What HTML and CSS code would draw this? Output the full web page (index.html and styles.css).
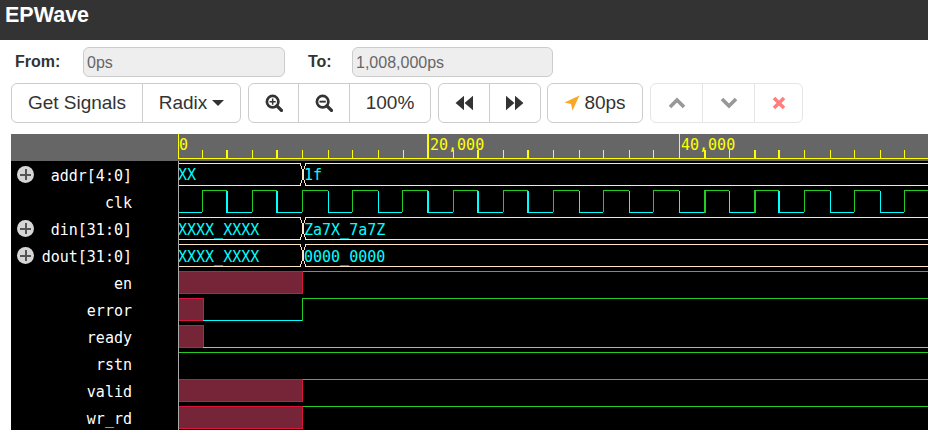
FILE: index.html
```html
<!DOCTYPE html>
<html lang="en">
<head>
  <meta charset="UTF-8" />
  <title>EPWave</title>
  <link rel="stylesheet" href="styles.css">
</head>
<body>

<div class="title-bar">EPWave</div>

<div class="range-row">
  <label class="range-label from-label">From:</label>
  <div class="range-input from-input">0ps</div>
  <label class="range-label to-label">To:</label>
  <div class="range-input to-input">1,008,000ps</div>
</div>

<div class="toolbar">
  <div class="btn-group">
    <button class="btn signals-btn">Get Signals</button>
    <button class="btn radix-btn">Radix <span class="caret"></span></button>
  </div>
  <div class="btn-group">
    <button class="btn zoom-btn">
      <svg class="icon" viewBox="0 0 16 16"><circle cx="6.800" cy="6.800" r="5.100" fill="none" stroke="#333" stroke-width="2.400"/><path d="M10.600 10.600l4 4" stroke="#333" stroke-width="3" stroke-linecap="round"/><path d="M4.100 6.800h5.400M6.800 4.100v5.400" stroke="#333" stroke-width="1.300"/></svg>
    </button>
    <button class="btn zoom-btn wide-zoom">
      <svg class="icon" viewBox="0 0 16 16"><circle cx="6.800" cy="6.800" r="5.100" fill="none" stroke="#333" stroke-width="2.400"/><path d="M10.600 10.600l4 4" stroke="#333" stroke-width="3" stroke-linecap="round"/><path d="M4 6.800h5.600" stroke="#333" stroke-width="1.700"/></svg>
    </button>
    <button class="btn pct-btn">100%</button>
  </div>
  <div class="btn-group">
    <button class="btn seek-btn">
      <svg class="icon" viewBox="0 0 16 16"><path d="M8 1.500v13L0.500 8zM16 1.500v13L8.500 8z" fill="#333"/></svg>
    </button>
    <button class="btn seek-btn">
      <svg class="icon" viewBox="0 0 16 16"><path d="M0 1.500v13L7.500 8zM8 1.500v13L15.500 8z" fill="#333"/></svg>
    </button>
  </div>
  <button class="btn cursor-btn">
    <svg class="arrow-icon" viewBox="0 0 16 16"><path d="M15.500 0.500L8.500 15.500 7 9 0.500 7.500z" fill="#f9a825"/></svg>80ps
  </button>
  <div class="btn-group faded">
    <button class="btn move-btn">
      <svg class="icon" viewBox="0 0 18 12"><path d="M2 10L9 3l7 7" fill="none" stroke="#333" stroke-width="3.600"/></svg>
    </button>
    <button class="btn move-btn">
      <svg class="icon" viewBox="0 0 18 12"><path d="M2 2L9 9l7-7" fill="none" stroke="#333" stroke-width="3.600"/></svg>
    </button>
    <button class="btn close-btn">
      <svg class="close-icon" viewBox="0 0 14 14"><path d="M2 2l10 10M12 2L2 12" stroke="#f00" stroke-width="3.600"/></svg>
    </button>
  </div>
</div>

<div class="wave-panel">
  <div class="names">
    <div class="ruler-space"></div>
    <div class="name-row"><span class="expand"></span>addr[4:0]</div>
    <div class="name-row">clk</div>
    <div class="name-row"><span class="expand"></span>din[31:0]</div>
    <div class="name-row"><span class="expand"></span>dout[31:0]</div>
    <div class="name-row">en</div>
    <div class="name-row">error</div>
    <div class="name-row">ready</div>
    <div class="name-row">rstn</div>
    <div class="name-row">valid</div>
    <div class="name-row">wr_rd</div>
  </div>

  <!-- viewBox uses page coordinates so the traces are easy to read off -->
  <svg class="waves" viewBox="178 134 750 296">
    <rect class="ruler-bg" x="178" y="134" width="750" height="27"/>
    <path class="tick" d="M178 158.500H928M202.500 150V158M252.500 150V158M302.500 150V158M328.500 150V158M352.500 150V158M378.500 150V158M403.500 150V158M453.500 150V158M503.500 150V158M553.500 150V158M579.500 150V158M603.500 150V158M629.500 150V158M653.500 150V158M679.500 134V158M729.500 150V158M804.500 150V158M830.500 150V158M854.500 150V158M880.500 150V158M904.500 150V158"/>
    <path class="tick-bold" d="M227 150V158M277 150V158M478 150V158M528 150V158M705 150V158M755 150V158M779 150V158M428 134V158M178 134V158"/>
    <text class="ruler-text" x="179" y="150">0</text>
    <text class="ruler-text" x="430" y="150">20,000</text>
    <text class="ruler-text" x="681" y="150">40,000</text>

    <path class="bus" d="M178 163.500H300L302.500 170V179L300 185.500H178M928 163.500H306L303.500 170V179L306 185.500H928"/>
    <path class="bus" d="M178 217.500H300L302.500 224V233L300 239.500H178M928 217.500H306L303.500 224V233L306 239.500H928"/>
    <path class="bus" d="M178 244.500H300L302.500 251V260L300 266.500H178M928 244.500H306L303.500 251V260L306 266.500H928"/>
    <text class="bus-text" x="178" y="180">XX</text>
    <text class="bus-text" x="304" y="180">1f</text>
    <text class="bus-text" x="178" y="235">XXXX_XXXX</text>
    <text class="bus-text" x="304" y="235">Za7X_7a7Z</text>
    <text class="bus-text" x="178" y="262">XXXX_XXXX</text>
    <text class="bus-text" x="304" y="262">0000_0000</text>

    <path class="low" d="M178 212.500H202M328.500 190.500V212.500H352M378.500 190.500V212.500H402M579.500 190.500V212.500H603M629.500 190.500V212.500H653M679.500 190.500V212.500H705M729.500 190.500V212.500H755M830.500 190.500V212.500H854M880.500 190.500V212.500H904M227 212.500H252M277 212.500H302M428 212.500H453M478 212.500H503M528 212.500H553M779 212.500H804"/>
    <path class="low-bold" d="M227 190.500V213M277 190.500V213M428 190.500V213M478 190.500V213M528 190.500V213M779 190.500V213"/>
    <path class="high" d="M202.500 212V190.500H227M252.500 212V190.500H277M302.500 212V190.500H328M352.500 212V190.500H378M402.500 212V190.500H428M453.500 212V190.500H478M503.500 212V190.500H528M553.500 212V190.500H579M603.500 212V190.500H629M653.500 212V190.500H679M705 190.500H729M755 190.500H779M804.500 212V190.500H830M854.500 212V190.500H880M904.500 212V190.500H928"/>
    <path class="high-bold" d="M705 190V213M755 190V213"/>

    <rect class="unknown" x="178.500" y="271.500" width="124" height="21.500"/>
    <path class="high" d="M303 271.500H928"/>
    <rect class="unknown" x="178.500" y="298.500" width="25" height="22"/>
    <path class="low" d="M203 320.500H302"/>
    <path class="high" d="M302.500 320.500V298.500H928"/>
    <rect class="unknown" x="178.500" y="325.500" width="25" height="22"/>
    <path class="low" d="M203 347.500H928"/>
    <path class="high" d="M177 352.500H928"/>
    <rect class="unknown" x="178.500" y="379.500" width="124" height="22"/>
    <path class="high" d="M303 379.500H928"/>
    <rect class="unknown" x="178.500" y="406.500" width="124" height="22"/>
    <path class="high" d="M303 406.500H928"/>

    <path class="start-line" d="M178.500 161V430"/>
  </svg>
</div>

</body>
</html>
```

FILE: styles.css
```css
html, body {
  height: 100%;
}

body {
  font-family: "Liberation Sans", Arial, sans-serif;
  margin: 0;
  background-color: #fff;
  color: #333;
  overflow: hidden;
}

.title-bar {
  height: 40px;
  padding-left: 5px;
  background-color: #333;
  color: #fff;
  font-size: 21.5px;
  font-weight: bold;
  line-height: 31px;
}

.range-row {
  display: flex;
  align-items: center;
  height: 30px;
  margin-top: 7px;
}

.range-label {
  font-size: 16px;
  font-weight: bold;
}

.from-label {
  margin-left: 15px;
  width: 68px;
}

.to-label {
  margin-left: 23px;
  width: 44px;
}

.range-input {
  box-sizing: border-box;
  height: 30px;
  padding: 0 3px;
  background-color: #eee;
  border: 1px solid #ccc;
  border-radius: 6px;
  color: #666;
  font-size: 16px;
  line-height: 29px;
}

.from-input {
  width: 202px;
}

.to-input {
  width: 201px;
}

.toolbar {
  display: flex;
  gap: 7px;
  height: 40px;
  margin-top: 6px;
  margin-left: 11px;
}

.btn-group {
  display: flex;
}

.btn {
  display: flex;
  align-items: center;
  justify-content: center;
  box-sizing: border-box;
  height: 40px;
  padding: 0;
  background-color: #fff;
  border: 1px solid #ccc;
  border-radius: 6px;
  color: #333;
  font-family: inherit;
  font-size: 19px;
}

.btn-group .btn {
  border-radius: 0;
  margin-left: -1px;
}

.btn-group .btn:first-child {
  border-radius: 6px 0 0 6px;
  margin-left: 0;
}

.btn-group .btn:last-child {
  border-radius: 0 6px 6px 0;
}

.signals-btn { width: 132px; }
.radix-btn { width: 99px; }
.zoom-btn { width: 51px; }
.wide-zoom { width: 52px; }
.pct-btn { width: 82px; }
.seek-btn { width: 52px; }
.cursor-btn { width: 96px; margin-left: -1px; }
.move-btn { width: 53px; }
.close-btn { width: 49px; }

.caret {
  display: inline-block;
  margin-left: 5px;
  border-top: 6px solid #333;
  border-left: 6px solid transparent;
  border-right: 6px solid transparent;
}

.icon {
  width: 18px;
  height: 18px;
}

.arrow-icon {
  width: 16px;
  height: 16px;
  margin-right: 4px;
}

.close-icon {
  width: 14px;
  height: 14px;
}

.faded {
  opacity: 0.5;
}

.wave-panel {
  display: flex;
  height: 296px;
  margin-top: 11px;
  margin-left: 11px;
  overflow: hidden;
  background-color: #000;
}

.names {
  flex: none;
  width: 167px;
  color: #fff;
  font-family: "DejaVu Sans Mono", monospace;
  font-size: 15px;
}

.ruler-space {
  height: 27px;
  background-color: #666;
}

.name-row {
  position: relative;
  box-sizing: border-box;
  height: 27px;
  padding-top: 2px;
  padding-right: 46px;
  line-height: 27px;
  text-align: right;
}

.expand {
  position: absolute;
  left: 6px;
  top: 5px;
  width: 17px;
  height: 17px;
  border-radius: 50%;
  background:
    linear-gradient(#555, #555) center / 11px 2px no-repeat,
    linear-gradient(#555, #555) center / 2px 11px no-repeat,
    #d6d6d6;
}

.waves {
  flex: none;
  width: 750px;
  height: 296px;
  shape-rendering: crispEdges;
}

.ruler-bg {
  fill: #666;
}

.tick {
  fill: none;
  stroke: #ff0;
  stroke-width: 1;
}

.tick-bold {
  fill: none;
  stroke: #ff0;
  stroke-width: 2;
}

.ruler-text {
  fill: #ff0;
  font-family: "DejaVu Sans Mono", monospace;
  font-size: 15px;
}

.bus {
  fill: none;
  stroke: #ffe4c4;
  stroke-width: 1;
}

.bus-text {
  fill: #0ff;
  font-family: "DejaVu Sans Mono", monospace;
  font-size: 15px;
}

.low {
  fill: none;
  stroke: #0ff;
  stroke-width: 1;
}

.low-bold {
  fill: none;
  stroke: #0ff;
  stroke-width: 2;
}

.high {
  fill: none;
  stroke: #2c2;
  stroke-width: 1;
}

.high-bold {
  fill: none;
  stroke: #2c2;
  stroke-width: 2;
}

.unknown {
  fill: #752537;
  stroke: #dc143c;
  stroke-width: 1;
}

.start-line {
  fill: none;
  stroke: #aaa;
  stroke-width: 1;
}
```
